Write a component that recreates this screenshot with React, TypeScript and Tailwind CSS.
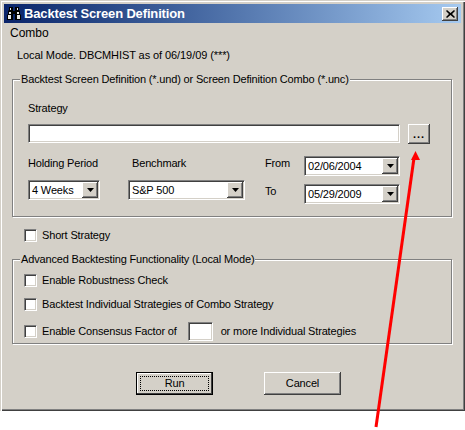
import type { ReactNode } from 'react'

const sunken =
  'border border-t-[#808080] border-l-[#808080] border-r-white border-b-white shadow-[inset_1px_1px_0_#404040,inset_-1px_-1px_0_#d4d0c8] bg-white'
const raised =
  'bg-[#d4d0c8] shadow-[inset_-1px_-1px_0_#404040,inset_1px_1px_0_#fff,inset_-2px_-2px_0_#808080]'

function Combo({ value, className }: { value: string; className: string }) {
  return (
    <div className={`${sunken} ${className} flex items-center justify-between pl-[3px] pr-[1px]`}>
      <span className="leading-none">{value}</span>
      <div className={`${raised} w-[16px] h-[16px] flex items-center justify-center`}>
        <svg width="7" height="4" viewBox="0 0 7 4">
          <path d="M0 0h7L3.5 4z" fill="#000" />
        </svg>
      </div>
    </div>
  )
}

function Check({ children }: { children: ReactNode }) {
  return (
    <div className="flex items-center gap-[5px]">
      <div className={`${sunken} w-[13px] h-[13px] shrink-0`} />
      <span className="leading-none whitespace-nowrap">{children}</span>
    </div>
  )
}

function Group({ title, className, children }: { title: string; className: string; children: ReactNode }) {
  return (
    <fieldset
      className={`${className} mx-[8px] w-[440px] border border-[#808080] shadow-[inset_1px_1px_0_#fff,1px_1px_0_#fff]`}
    >
      <legend className="ml-[7px] pl-[1px] pr-[1px] h-[14px] leading-[14px] bg-[#d4d0c8]">{title}</legend>
      {children}
    </fieldset>
  )
}

export default function App() {
  return (
    <div className="bg-white w-[465px] h-[430px] overflow-hidden relative font-['Liberation_Sans',sans-serif] text-[11px] tracking-[-0.16px] text-black">
      <div className="w-[465px] h-[411px] bg-[#d4d0c8] pt-[4px] pl-[4px] pr-[4px] flex flex-col shadow-[inset_1px_1px_0_#d4d0c8,inset_2px_2px_0_#fff,inset_-1px_-1px_0_#404040,inset_-2px_-2px_0_#808080]">
        {/* Title bar */}
        <div className="h-[19px] shrink-0 bg-gradient-to-r from-[#0a246a] to-[#a6caf0] flex items-center pl-[3px] pr-[3px] text-white">
          <svg width="14" height="13" viewBox="0 0 14 13" className="shrink-0">
            <path d="M2 0h4v4h2V0h4v3l1 1v3l1 1v5H8V7H6v6H0V8l1-1V4l1-1z" fill="#000" />
            <path d="M3 1h1v2H3zM10 1h1v2h-1zM2 5h2v2H2zM10 5h2v2h-2zM1 8h3v4H1zM10 8h3v4h-3z" fill="#e8e8e8" />
          </svg>
          <span className="ml-[3px] font-bold text-[13px] tracking-[-0.15px] leading-none whitespace-nowrap">Backtest Screen Definition</span>
          <div className={`${raised} ml-auto w-[16px] h-[14px] flex items-center justify-center`}>
            <svg width="9" height="8" viewBox="0 0 9 8">
              <path d="M1 0l3.5 3L8 0l1 1-3 3 3 3-1 1-3.500-3L1 8 0 7l3-3-3-3z" fill="#000" />
            </svg>
          </div>
        </div>

        <div className="pl-[6px] mt-[3px] h-[15px] text-[12px] tracking-normal leading-[15px]">Combo</div>
        <div className="pl-[13px] mt-[7px] h-[14px] leading-[14px] tracking-[-0.08px]">Local Mode. DBCMHIST as of 06/19/09 (***)</div>

        {/* Screen definition */}
        <Group title="Backtest Screen Definition (*.und) or Screen Definition Combo (*.unc)" className="mt-[10px] h-[145px]">
          <div className="pl-[15px] pt-[15px]">
            <div className="h-[14px] leading-[14px]">Strategy</div>
            <div className="mt-[9px] flex items-start gap-[8px]">
              <div className={`${sunken} w-[372px] h-[19px]`} />
              <div className={`${raised} w-[22px] h-[20px] flex items-end justify-center pb-[4px] font-bold tracking-[1px] leading-none`}>...</div>
            </div>
            <div className="mt-[12px] flex items-start">
              <div className="w-[104px]">
                <div className="h-[14px] leading-[14px]">Holding Period</div>
                <Combo value="4 Weeks" className="mt-[10px] w-[72px] h-[20px]" />
              </div>
              <div className="w-[133px]">
                <div className="h-[14px] leading-[14px]">Benchmark</div>
                <Combo value="S&P 500" className="mt-[10px] -ml-[4px] w-[117px] h-[20px]" />
              </div>
              <div className="grid grid-cols-[39px_96px] gap-y-[8px] items-center">
                <span className="pb-[5px] leading-none">From</span>
                <Combo value="02/06/2004" className="w-[96px] h-[20px]" />
                <span className="pb-[5px] leading-none">To</span>
                <Combo value="05/29/2009" className="w-[96px] h-[20px]" />
              </div>
            </div>
          </div>
        </Group>

        <div className="mt-[12px] pl-[20px]">
          <Check>Short Strategy</Check>
        </div>

        {/* Advanced options */}
        <Group title="Advanced Backtesting Functionality (Local Mode)" className="mt-[10px] h-[92px]">
          <div className="pl-[11px] pt-[8px] flex flex-col">
            <Check>Enable Robustness Check</Check>
            <div className="mt-[11px]">
              <Check>Backtest Individual Strategies of Combo Strategy</Check>
            </div>
            <div className="mt-[11px] flex items-center">
              <Check>Enable Consensus Factor of</Check>
              <div className={`${sunken} w-[25px] h-[19px] ml-[11px]`} />
              <span className="ml-[8px] leading-none">or more Individual Strategies</span>
            </div>
          </div>
        </Group>

        {/* Buttons */}
        <div className="mt-[28px] flex pl-[132px] gap-[51px]">
          <div className="w-[77px] h-[23px] border border-black bg-[#d4d0c8] shadow-[inset_-1px_-1px_0_#404040,inset_1px_1px_0_#fff] p-[3px]">
            <div className="w-full h-full border border-dotted border-black flex items-center justify-center leading-none">
              Run
            </div>
          </div>
          <div className={`${raised} w-[77px] h-[23px] flex items-center justify-center leading-none`}>Cancel</div>
        </div>
      </div>

      {/* Red callout arrow */}
      <svg width="465" height="430" viewBox="0 0 465 430" className="absolute inset-0 pointer-events-none">
        <path d="M376 427L414 158" stroke="#ff0000" strokeWidth="3" fill="none" />
        <path d="M415.500 151l4.500 9h-9z" fill="#ff0000" />
      </svg>
    </div>
  )
}
